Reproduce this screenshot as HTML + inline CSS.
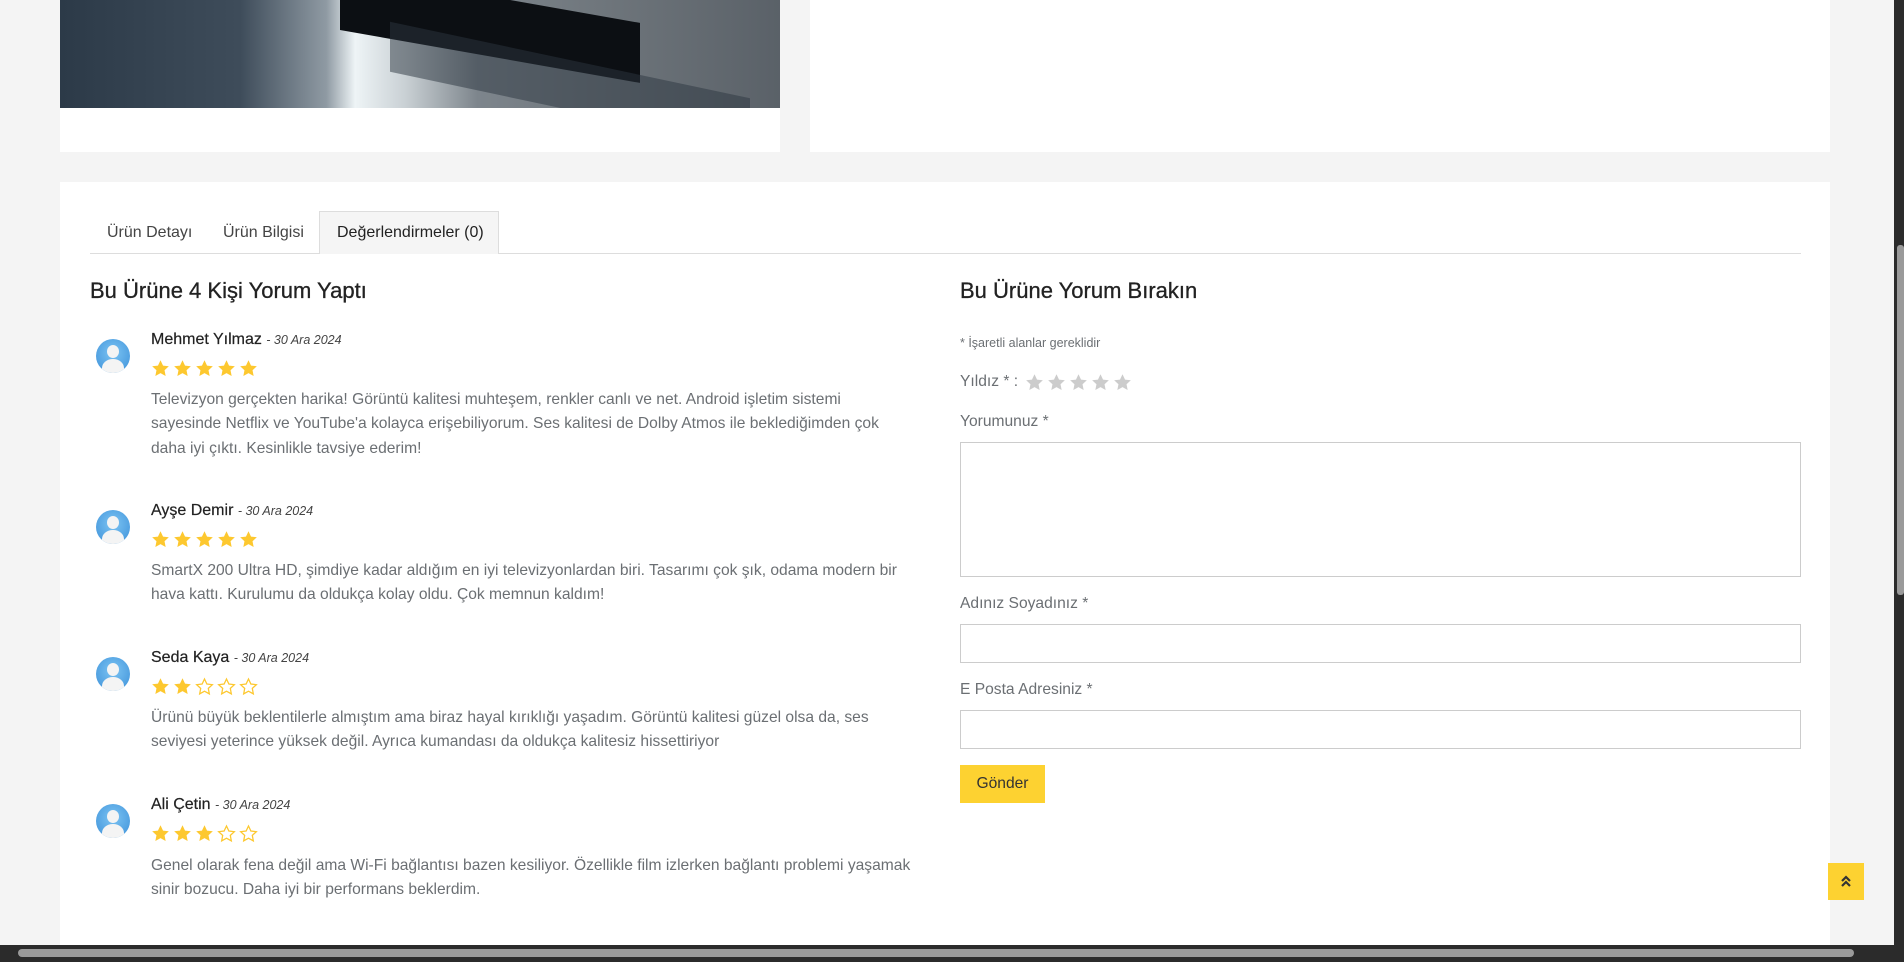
<!DOCTYPE html>
<html><head><meta charset="utf-8"><style>
*{margin:0;padding:0;box-sizing:border-box}
body{width:1904px;height:962px;background:#f4f4f4;font-family:"Liberation Sans",sans-serif;position:relative;overflow:hidden;color:#333}
.abs{position:absolute}
.panel{background:#fff;position:absolute}
.img{position:absolute;left:60px;top:0;width:720px;height:108px;overflow:hidden;
background:linear-gradient(90deg,#2c3a48 0%,#3e4c5a 25%,#8f9aa3 37%,#eef4f6 41%,#c9d0d4 48%,#7d858c 58%,#6f767c 75%,#5a6168 100%)}
.tab{position:absolute;top:211px;height:43px;font-size:16px;line-height:43px;color:#333}
h3{position:absolute;font-size:22px;font-weight:normal;color:#222;-webkit-text-stroke:0.3px #222}
.av{position:absolute;left:96px;width:34px;height:34px;border-radius:50%;background:radial-gradient(circle at 50% 40%,#7cc4f3,#3b8fd8);overflow:hidden}
.av:before{content:"";position:absolute;left:11px;top:6px;width:12px;height:13px;border-radius:50%;background:#f4f4f4}
.av:after{content:"";position:absolute;left:6px;top:20px;width:22px;height:18px;border-radius:50% 50% 0 0;background:#f4f4f4}
.name{position:absolute;left:151px;font-size:16px;color:#222;-webkit-text-stroke:0.2px #222}
.name i{font-size:12.5px;color:#444;-webkit-text-stroke:0}
.stars{position:absolute;left:151px;height:19px}
.stars svg{width:19px;height:19px;margin-right:3px;display:inline-block}
.txt{position:absolute;left:151px;width:800px;font-size:15.6px;line-height:24.4px;color:#6b6f73;white-space:nowrap}
.lbl{position:absolute;left:960px;font-size:15.6px;color:#6b6f73}
.inp{position:absolute;left:960px;width:841px;border:1px solid #ccc;background:#fff}
</style></head><body>
<div class="panel" style="left:60px;top:0;width:720px;height:152px"></div>
<div class="img">
 <div class="abs" style="left:280px;top:-30px;width:300px;height:60px;background:#0c0f13;transform:skewY(10deg);transform-origin:0 0"></div>
 <div class="abs" style="left:330px;top:60px;width:360px;height:50px;background:#2b3540;opacity:.5;transform:skewY(12deg)"></div>
</div>
<div class="panel" style="left:810px;top:0;width:1020px;height:152px"></div>
<div class="panel" style="left:60px;top:182px;width:1770px;height:780px"></div>

<div class="abs" style="left:90px;top:253px;width:1711px;height:1px;background:#ddd"></div>
<div class="abs" style="left:319px;top:211px;width:180px;height:43px;background:#f5f5f5;border:1px solid #ddd;border-bottom:none"></div>
<div class="tab" style="left:107px;color:#444">Ürün Detayı</div>
<div class="tab" style="left:223px;color:#444">Ürün Bilgisi</div>
<div class="tab" style="left:337px;color:#222">Değerlendirmeler (0)</div>

<h3 style="left:90px;top:278px">Bu Ürüne 4 Kişi Yorum Yaptı</h3>
<h3 style="left:960px;top:278px">Bu Ürüne Yorum Bırakın</h3>

<svg width="0" height="0" style="position:absolute"><defs>
<symbol id="sf" viewBox="0 0 24 24"><path d="M12 1.5l3.2 6.8 7.3.9-5.4 5 1.4 7.3L12 17.9l-6.5 3.6 1.4-7.3-5.4-5 7.3-.9z" fill="#fdc82f"/></symbol>
<symbol id="se" viewBox="0 0 24 24"><path d="M12 2.5l3 6.4 6.9.8-5.1 4.7 1.3 6.9L12 17.9l-6.1 3.4 1.3-6.9-5.1-4.7 6.9-.8z" fill="none" stroke="#fdc82f" stroke-width="1.6"/></symbol>
<symbol id="sg" viewBox="0 0 24 24"><path d="M12 1.5l3.2 6.8 7.3.9-5.4 5 1.4 7.3L12 17.9l-6.5 3.6 1.4-7.3-5.4-5 7.3-.9z" fill="#ccc"/></symbol>
</defs></svg>

<div class="av" style="top:339px"></div>
<div class="name" style="top:331px">Mehmet Yılmaz <i>- 30 Ara 2024</i></div>
<div class="stars" style="top:359px"><svg><use href="#sf"/></svg><svg><use href="#sf"/></svg><svg><use href="#sf"/></svg><svg><use href="#sf"/></svg><svg><use href="#sf"/></svg></div>
<div class="txt" style="top:388px">Televizyon gerçekten harika! Görüntü kalitesi muhteşem, renkler canlı ve net. Android işletim sistemi<br>sayesinde Netflix ve YouTube'a kolayca erişebiliyorum. Ses kalitesi de Dolby Atmos ile beklediğimden çok<br>daha iyi çıktı. Kesinlikle tavsiye ederim!</div>

<div class="av" style="top:510px"></div>
<div class="name" style="top:502px">Ayşe Demir <i>- 30 Ara 2024</i></div>
<div class="stars" style="top:530px"><svg><use href="#sf"/></svg><svg><use href="#sf"/></svg><svg><use href="#sf"/></svg><svg><use href="#sf"/></svg><svg><use href="#sf"/></svg></div>
<div class="txt" style="top:559px">SmartX 200 Ultra HD, şimdiye kadar aldığım en iyi televizyonlardan biri. Tasarımı çok şık, odama modern bir<br>hava kattı. Kurulumu da oldukça kolay oldu. Çok memnun kaldım!</div>

<div class="av" style="top:657px"></div>
<div class="name" style="top:649px">Seda Kaya <i>- 30 Ara 2024</i></div>
<div class="stars" style="top:677px"><svg><use href="#sf"/></svg><svg><use href="#sf"/></svg><svg><use href="#se"/></svg><svg><use href="#se"/></svg><svg><use href="#se"/></svg></div>
<div class="txt" style="top:706px">Ürünü büyük beklentilerle almıştım ama biraz hayal kırıklığı yaşadım. Görüntü kalitesi güzel olsa da, ses<br>seviyesi yeterince yüksek değil. Ayrıca kumandası da oldukça kalitesiz hissettiriyor</div>

<div class="av" style="top:804px"></div>
<div class="name" style="top:796px">Ali Çetin <i>- 30 Ara 2024</i></div>
<div class="stars" style="top:824px"><svg><use href="#sf"/></svg><svg><use href="#sf"/></svg><svg><use href="#sf"/></svg><svg><use href="#se"/></svg><svg><use href="#se"/></svg></div>
<div class="txt" style="top:854px">Genel olarak fena değil ama Wi-Fi bağlantısı bazen kesiliyor. Özellikle film izlerken bağlantı problemi yaşamak<br>sinir bozucu. Daha iyi bir performans beklerdim.</div>

<div class="lbl" style="top:336px;font-size:12.5px">* İşaretli alanlar gereklidir</div>
<div class="lbl" style="top:373px">Yıldız * :</div>
<div class="abs" style="left:1025px;top:373px;height:19px"><svg width="19" height="19" style="margin-right:3px"><use href="#sg"/></svg><svg width="19" height="19" style="margin-right:3px"><use href="#sg"/></svg><svg width="19" height="19" style="margin-right:3px"><use href="#sg"/></svg><svg width="19" height="19" style="margin-right:3px"><use href="#sg"/></svg><svg width="19" height="19"><use href="#sg"/></svg></div>
<div class="lbl" style="top:413px">Yorumunuz *</div>
<div class="inp" style="top:442px;height:135px"></div>
<div class="lbl" style="top:595px">Adınız Soyadınız *</div>
<div class="inp" style="top:624px;height:39px"></div>
<div class="lbl" style="top:681px">E Posta Adresiniz *</div>
<div class="inp" style="top:710px;height:39px"></div>
<div class="abs" style="left:960px;top:765px;width:85px;height:38px;background:#fdd231;font-size:15.6px;line-height:38px;text-align:center;color:#333">Gönder</div>

<div class="abs" style="left:1828px;top:863px;width:36px;height:37px;background:#fdd231;text-align:center">
<svg width="14" height="14" viewBox="0 0 14 14" style="margin-top:11px"><path d="M3 7l4-4 4 4M3 12l4-4 4 4" fill="none" stroke="#333" stroke-width="2.2"/></svg></div>

<div class="abs" style="left:1894px;top:0;width:10px;height:962px;background:#2b2b2b"></div>
<div class="abs" style="left:1897px;top:245px;width:7px;height:350px;background:#9a9a9a;border-radius:3px"></div>
<div class="abs" style="left:0;top:945px;width:1904px;height:17px;background:#2b2b2b"></div>
<div class="abs" style="left:18px;top:949px;width:1836px;height:8px;background:#9a9a9a;border-radius:4px"></div>
</body></html>
